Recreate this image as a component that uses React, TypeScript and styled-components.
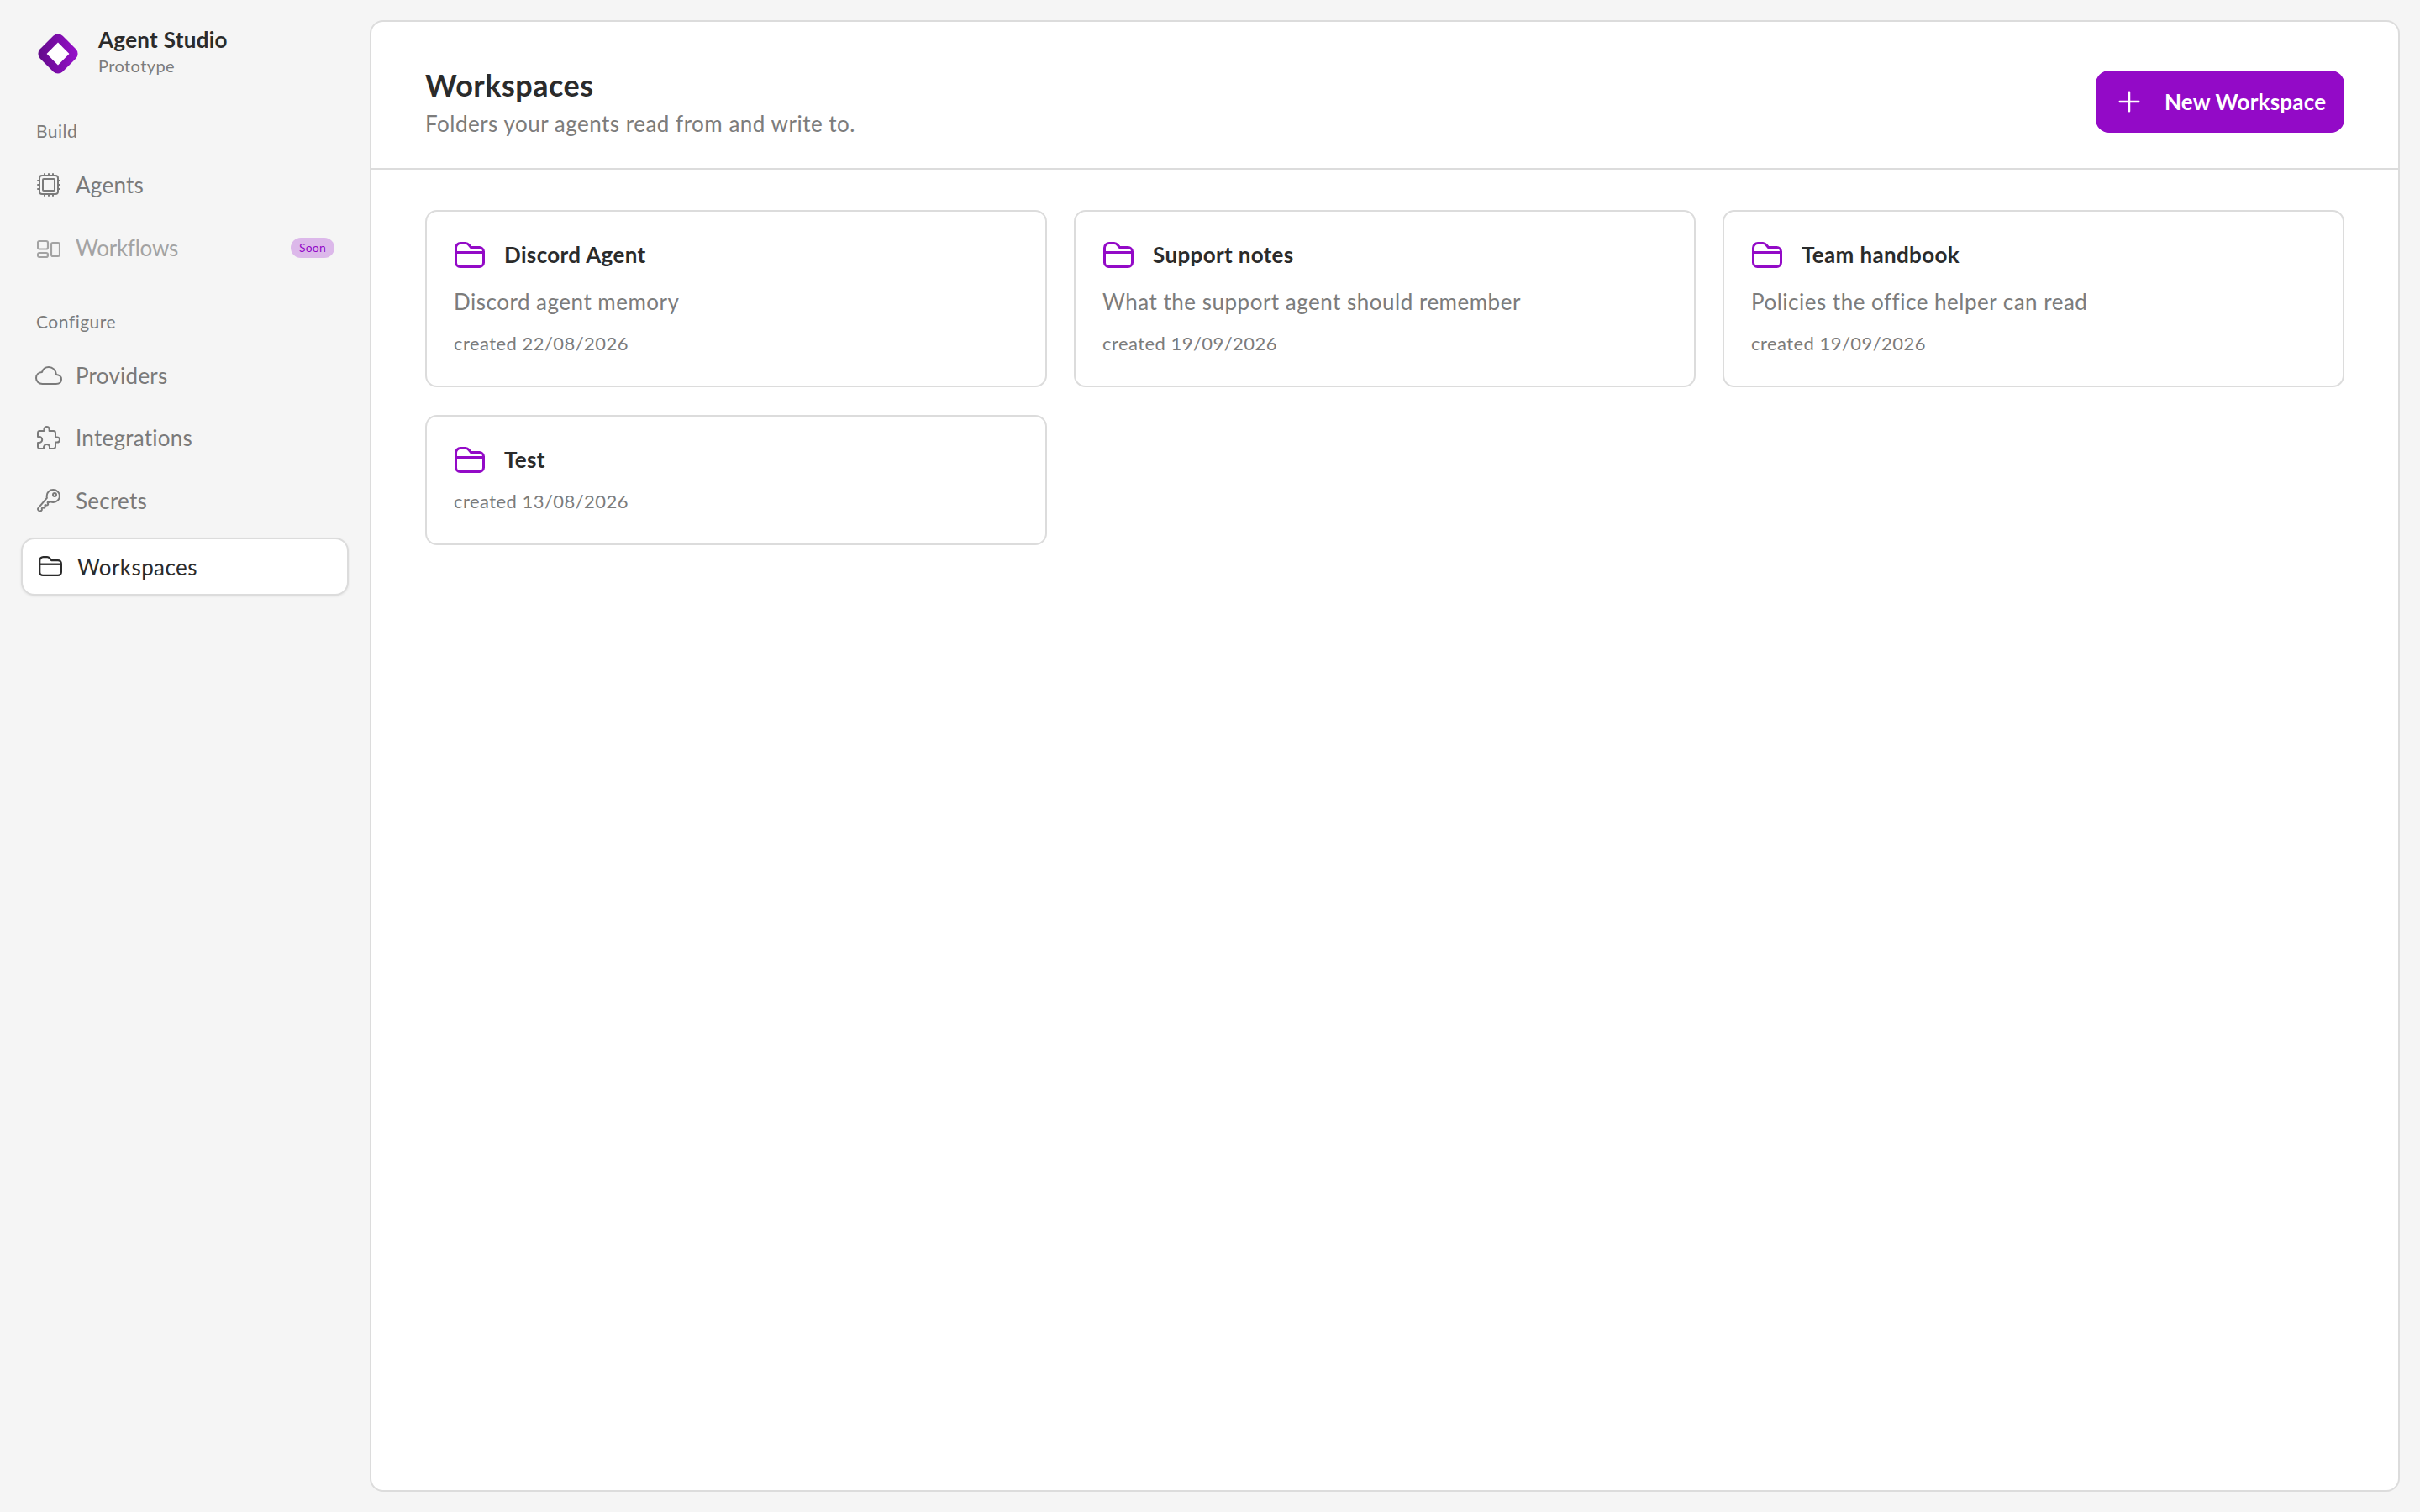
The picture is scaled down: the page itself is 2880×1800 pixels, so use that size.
import React from "react";
import styled, { createGlobalStyle } from "styled-components";
import {
  IoAddOutline,
  IoCloudOutline,
  IoExtensionPuzzleOutline,
  IoHardwareChipOutline,
  IoKeyOutline,
} from "react-icons/io5";

const GlobalStyle = createGlobalStyle`
  * { box-sizing: border-box; }
  html, body { margin: 0; padding: 0; height: 100%; }
  body {
    background: #f5f5f5;
    font-family: "Lato", "Liberation Sans", sans-serif;
    color: #2b2b2b;
  }
`;

const Shell = styled.div`
  display: flex;
  width: 2880px;
  height: 1800px;
  padding: 24px 24px 24px 0;
`;

const Sidebar = styled.aside`
  width: 440px;
  flex-shrink: 0;
  padding: 14px 25px 0;
  display: flex;
  flex-direction: column;
`;

const Brand = styled.div`
  display: flex;
  align-items: center;
  gap: 22px;
  padding-left: 18px;
  height: 52px;
`;

const BrandText = styled.div`
  margin-top: -4px;
`;

const BrandName = styled.div`
  font-size: 26px;
  font-weight: 700;
  line-height: 32px;
  letter-spacing: 0.3px;
  color: #2b2b2b;
`;

const BrandSub = styled.div`
  font-size: 20px;
  line-height: 30px;
  letter-spacing: 0.4px;
  color: #7c7c7c;
`;

const SectionLabel = styled.div<{ $top: number; $bottom: number }>`
  font-size: 21px;
  line-height: 26px;
  letter-spacing: 0.5px;
  color: #7c7c7c;
  padding-left: 18px;
  margin: ${(p) => p.$top}px 0 ${(p) => p.$bottom}px;
`;

const NavList = styled.nav`
  display: flex;
  flex-direction: column;
  gap: 10.5px;
`;

const NavItem = styled.div<{ $muted?: boolean }>`
  height: 64px;
  display: flex;
  align-items: center;
  gap: 18px;
  padding: 0 17px 0 19px;
  font-size: 26px;
  letter-spacing: ${(p) => (p.$muted ? "-0.25px" : "0.25px")};
  color: ${(p) => (p.$muted ? "#a3a3a3" : "#7a7a7a")};
`;

const ActiveNavItem = styled(NavItem)`
  height: 69px;
  margin-top: 2px;
  padding: 0 19px;
  border: 2px solid #dcdcdc;
  border-radius: 16px;
  background: #ffffff;
  color: #2b2b2b;
  letter-spacing: 0.4px;
  box-shadow: 0 1px 3px rgba(0, 0, 0, 0.08);
`;

const IconSlot = styled.span`
  width: 28px;
  height: 28px;
  flex-shrink: 0;
  display: flex;
  align-items: center;
  justify-content: center;

  svg {
    flex-shrink: 0;
  }
`;

const SoonBadge = styled.span`
  margin-left: auto;
  width: 52px;
  height: 24px;
  border-radius: 12px;
  background: #dcb8ea;
  color: #930ac7;
  font-size: 14px;
  line-height: 24px;
  letter-spacing: 0.2px;
  text-align: center;
`;

const Main = styled.main`
  flex: 1;
  background: #ffffff;
  border: 2px solid #dcdcdc;
  border-radius: 16px;
  display: flex;
  flex-direction: column;
`;

const Header = styled.header`
  height: 176px;
  flex-shrink: 0;
  border-bottom: 2px solid #dcdcdc;
  display: flex;
  align-items: flex-start;
  justify-content: space-between;
  padding: 53px 64px 0;
`;

const Title = styled.h1`
  margin: 0;
  font-size: 36px;
  line-height: 44px;
  font-weight: 700;
  letter-spacing: 0.5px;
  color: #2b2b2b;
`;

const Subtitle = styled.p`
  margin: 8px 0 0;
  font-size: 26px;
  line-height: 32px;
  letter-spacing: 0.5px;
  color: #7c7c7c;
`;

const NewButton = styled.button`
  height: 74px;
  width: 296px;
  margin-top: 5px;
  border: none;
  border-radius: 16px;
  background: #930ac7;
  color: #ffffff;
  font-family: inherit;
  font-size: 26px;
  font-weight: 700;
  letter-spacing: 0.2px;
  white-space: nowrap;
  display: flex;
  align-items: center;
  gap: 28px;
  padding: 0 26px;
`;

const CardGrid = styled.div`
  display: grid;
  grid-template-columns: repeat(3, 1fr);
  gap: 33px 32px;
  padding: 48px 64px;
  align-items: start;
`;

const Card = styled.div`
  border: 2px solid #dcdcdc;
  border-radius: 14px;
  padding: 35px 32px 36px;
`;

const CardHead = styled.div`
  display: flex;
  align-items: center;
  gap: 22px;
  height: 32px;
  font-size: 26px;
  font-weight: 700;
  letter-spacing: 0.35px;
  color: #2b2b2b;
`;

const FolderSlot = styled(IconSlot)`
  width: 38px;
  height: 38px;
  color: #930ac7;
`;

const CardDesc = styled.p`
  margin: 24px 0 0;
  font-size: 26px;
  line-height: 32px;
  letter-spacing: 0.5px;
  color: #7c7c7c;
`;

const CardDate = styled.p`
  margin: 20px 0 0;
  font-size: 22px;
  line-height: 28px;
  letter-spacing: 0.45px;
  color: #7c7c7c;
`;

const Logo = () => (
  <svg width="52" height="52" viewBox="0 0 52 52">
    <defs>
      <linearGradient id="logoFill" x1="0" y1="1" x2="1" y2="0">
        <stop offset="0" stopColor="#5f0a86" />
        <stop offset="1" stopColor="#9a10cf" />
      </linearGradient>
    </defs>
    <rect x="7" y="7" width="38" height="38" rx="8" transform="rotate(45 26 26)" fill="url(#logoFill)" />
    <rect x="16.5" y="16.5" width="19" height="19" transform="rotate(45 26 26)" fill="#ffffff" />
  </svg>
);

const FlowIcon = () => (
  <svg width="28" height="28" viewBox="0 0 28 28" fill="none" stroke="currentColor" strokeWidth="2.2">
    <rect x="1" y="6" width="12" height="9.5" rx="2" />
    <rect x="1" y="20" width="12" height="5" rx="2" />
    <rect x="17" y="8" width="10" height="16" rx="2" />
  </svg>
);

const FolderIcon = ({ width }: { width: number }) => (
  <svg width={width} height={(width * 31) / 36} viewBox="0 0 36 31" fill="none" stroke="currentColor" strokeWidth="3" strokeLinejoin="round">
    <path d="M1.5 7a5.5 5.5 0 0 1 5.5-5.5h6c2 0 3 .8 4 2l2.5 3h10a5 5 0 0 1 5 5v13a5 5 0 0 1-5 5H6.5a5 5 0 0 1-5-5Z" />
    <path d="M1.5 12.5h33" />
  </svg>
);

const workspaces = [
  { name: "Discord Agent", desc: "Discord agent memory", date: "created 22/08/2026" },
  { name: "Support notes", desc: "What the support agent should remember", date: "created 19/09/2026" },
  { name: "Team handbook", desc: "Policies the office helper can read", date: "created 19/09/2026" },
  { name: "Test", date: "created 13/08/2026" },
];

export default function App() {
  return (
    <>
      <GlobalStyle />
      <Shell>
        <Sidebar>
          <Brand>
            <Logo />
            <BrandText>
              <BrandName>Agent Studio</BrandName>
              <BrandSub>Prototype</BrandSub>
            </BrandText>
          </Brand>
          <SectionLabel $top={53} $bottom={19}>Build</SectionLabel>
          <NavList>
            <NavItem><IconSlot><IoHardwareChipOutline size={32} /></IconSlot>Agents</NavItem>
            <NavItem $muted><IconSlot><FlowIcon /></IconSlot>Workflows<SoonBadge>Soon</SoonBadge></NavItem>
          </NavList>
          <SectionLabel $top={43} $bottom={19}>Configure</SectionLabel>
          <NavList>
            <NavItem><IconSlot><IoCloudOutline size={32} /></IconSlot>Providers</NavItem>
            <NavItem><IconSlot><IoExtensionPuzzleOutline size={32} /></IconSlot>Integrations</NavItem>
            <NavItem><IconSlot><IoKeyOutline size={32} /></IconSlot>Secrets</NavItem>
            <ActiveNavItem><IconSlot><FolderIcon width={28} /></IconSlot>Workspaces</ActiveNavItem>
          </NavList>
        </Sidebar>
        <Main>
          <Header>
            <div>
              <Title>Workspaces</Title>
              <Subtitle>Folders your agents read from and write to.</Subtitle>
            </div>
            <NewButton><IconSlot><IoAddOutline size={40} /></IconSlot>New Workspace</NewButton>
          </Header>
          <CardGrid>
            {workspaces.map((w) => (
              <Card key={w.name}>
                <CardHead><FolderSlot><FolderIcon width={36} /></FolderSlot>{w.name}</CardHead>
                {w.desc && <CardDesc>{w.desc}</CardDesc>}
                <CardDate>{w.date}</CardDate>
              </Card>
            ))}
          </CardGrid>
        </Main>
      </Shell>
    </>
  );
}
